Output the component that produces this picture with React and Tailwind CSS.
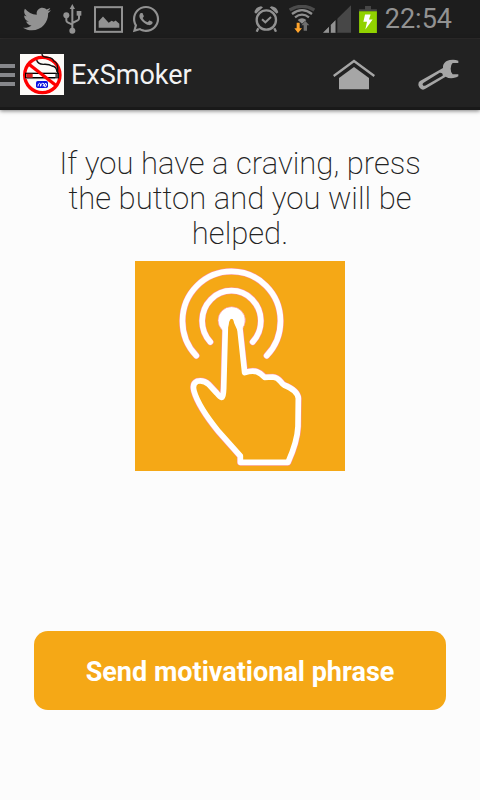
import { FaTwitter, FaWhatsapp } from 'react-icons/fa';

function UsbIcon() {
  return (
    <svg viewBox="189 13 57 90" className="h-[30px] w-[19px]" fill="#929292" stroke="#929292">
      <path d="M217 13l8 15h-16z" stroke="none" />
      <path d="M217 24v68M199 50v12q0 4 4 6l14 7M237 43v13q0 4-4 6l-16 8" fill="none" strokeWidth="6" />
      <circle cx="199" cy="47" r="9" stroke="none" />
      <rect x="230" y="34" width="14" height="14" stroke="none" />
      <circle cx="217" cy="93" r="9" stroke="none" />
    </svg>
  );
}

function PictureIcon() {
  return (
    <svg viewBox="279 17 87 80" className="h-[27px] w-[29px]">
      <rect x="282" y="20" width="81" height="74" fill="none" stroke="#929292" strokeWidth="6" />
      <path d="M293 82V62l13-14 17 19 9-6 6 3 6-4 11 10v12z" fill="#929292" />
    </svg>
  );
}

function AlarmIcon() {
  return (
    <svg viewBox="41 19 75 78" className="h-[26px] w-[25px]" fill="none" stroke="#929292">
      <circle cx="78" cy="61" r="29" strokeWidth="7" />
      <path d="M65 59l10 9 17-16" strokeWidth="6" />
      <path d="M54 86l-5 10M102 86l5 10" strokeWidth="7" />
      <path d="M42 38q4-16 20-18l6 3-21 19zM114 38q-4-16-20-18l-6 3 21 19z" fill="#929292" stroke="none" />
    </svg>
  );
}

function WifiIcon() {
  return (
    <svg viewBox="148 13 78 84" className="h-7 w-[26px]" fill="none">
      <path d="M150 28q37-22 74 0" stroke="#4b4b4b" strokeWidth="10" />
      <path d="M157 40q30-23 60 0" stroke="#8f8f8f" strokeWidth="7" />
      <path d="M166 50q21-16 42 0" stroke="#8f8f8f" strokeWidth="7" />
      <path d="M174 58q13-10 26 0l-13 11z" fill="#8f8f8f" />
      <path d="M197 61l12 13h-7v16h-10V74h-7z" fill="#6e6e6e" />
      <path d="M171 66h9v17h7l-12 14-11-14h7z" fill="#ffa42c" />
    </svg>
  );
}

function SignalIcon() {
  return (
    <svg viewBox="252 13 84 84" className="size-7">
      <path d="M336 14v82h-84z" fill="#474747" />
      <path d="M270 78v18h-18z" fill="#929292" />
      <path d="M275 73l15-15v38h-15z" fill="#929292" />
      <path d="M270 78l5-5v23h-5zM290 58l5-5v43h-5z" fill="#1d1d1d" />
    </svg>
  );
}

function BatteryIcon() {
  return (
    <svg viewBox="357 14 54 82" className="h-[27px] w-[18px]">
      <path d="M375 14h18v10h18v7h-54v-7h18z" fill="#474747" />
      <path d="M357 30h54v66h-54z" fill="#91d200" />
      <path d="M375 40h17l-5 15h11l-22 30 5-23h-11z" fill="#fff" />
    </svg>
  );
}

function StatusBar() {
  return (
    <div className="flex h-[39px] items-center justify-between border-b border-[#2f2d2d] bg-[#1d1d1d] pr-7 pl-[23px] text-[#929292]">
      <div className="flex items-center gap-3">
        <FaTwitter className="size-7" />
        <UsbIcon />
        <div className="flex items-center gap-2">
          <PictureIcon />
          <FaWhatsapp className="size-[30px]" />
        </div>
      </div>
      <div className="flex items-center gap-2.5">
        <AlarmIcon />
        <div className="flex items-center gap-2">
          <WifiIcon />
          <SignalIcon />
          <BatteryIcon />
          <span className="text-[27px] leading-8">22:54</span>
        </div>
      </div>
    </div>
  );
}

function AppLogo() {
  return (
    <svg viewBox="60 54 132 123" className="h-[41px] w-11">
      <rect x="60" y="54" width="132" height="123" fill="#fdfbf8" />
      <circle cx="127" cy="117" r="53" fill="none" stroke="#f00" strokeWidth="10" />
      <path d="M77 127h88" stroke="#b9aeb0" strokeWidth="5" />
      <rect x="77" y="112" width="98" height="13" fill="#fff" stroke="#000" strokeWidth="4" />
      <rect x="79" y="113" width="19" height="12" fill="#e02020" />
      <rect x="166" y="113" width="9" height="12" fill="#555" />
      <path
        d="M126 54q0 10 18 10 14 1 17 11 12 5 12 20v16M110 72q3 12 20 13 18-1 26 5 14 1 15 18"
        fill="none"
        stroke="#111"
        strokeWidth="4"
      />
      <path d="M86 84l84 66" stroke="#f00" strokeWidth="10" />
      <rect x="108" y="135" width="36" height="21" rx="5" fill="#0b10e0" />
      <path
        d="M114 151q0-9 5-9t2 9M122 151q0-9 6-9t4 5-4 3M133 149q1-7 5-7t0 8-5-3"
        fill="none"
        stroke="#fff"
        strokeWidth="3"
      />
    </svg>
  );
}

function HomeIcon() {
  return (
    <svg viewBox="39 56 126 93" className="h-[31px] w-[42px]">
      <path d="M41 107l61-45 61 45" fill="none" stroke="#a6a6a6" strokeWidth="7" />
      <path d="M102 80l45 33v34H57v-34z" fill="#a6a6a6" />
    </svg>
  );
}

function WrenchIcon() {
  return (
    <svg viewBox="293 55 123 93" className="h-[31px] w-[41px]">
      <path
        fillRule="evenodd"
        fill="#a6a6a6"
        d="M414 67V60Q402 55 388 58C374 61 367 71 368 82L299 121Q292 126 295 136 299 146 308 147L314 145 376 108Q386 114 399 112 410 111 414 107V101H397Q391 96 391 84T397 67ZM310 126L358 96Q369 95 367 105L317 134Q309 138 307 132 306 129 310 126Z"
      />
    </svg>
  );
}

function ActionBar() {
  return (
    <header className="flex h-[71px] items-center bg-[#222] pr-[21px] shadow-[inset_0_-3px_0_#191919,0_1px_4px_rgba(0,0,0,0.5)]">
      <button type="button" aria-label="Open menu" className="flex items-center gap-[5px]">
        <span className="flex w-[15px] flex-col gap-[5px]">
          <span className="h-1 bg-[#86878b]" />
          <span className="h-1 bg-[#86878b]" />
          <span className="h-1 bg-[#86878b]" />
        </span>
        <AppLogo />
      </button>
      <h1 className="ml-[7px] text-[27px] leading-8 text-[#f3f3f3]">ExSmoker</h1>
      <nav className="ml-auto flex items-center gap-[43px]">
        <button type="button" aria-label="Home">
          <HomeIcon />
        </button>
        <button type="button" aria-label="Settings">
          <WrenchIcon />
        </button>
      </nav>
    </header>
  );
}

const OUTER_RING = 'M199 302A147 149 0 1 1 410 302';
const INNER_RING = 'M241 261A88 91 0 1 1 368 261';
const HAND =
  'M286 214 L281 400Q280 428 274 427 270 426 260 414L236 388Q220 374 201 379 186 386 192 408 205 455 266 530L331 603V622H474Q502 560 504 514L505 430Q503 406 462 390C450 382 450 368 428 366L404 367C390 352 376 342 344 353L329 214Q322 182 305 182T286 214Z';

function CravingButton() {
  return (
    <button type="button" aria-label="I have a craving" className="bg-[#f5a816]">
      <svg viewBox="15 18 630 630" className="size-[210px]" fill="none" strokeLinecap="round" strokeLinejoin="round">
        {/* pink fringe first, white line on top */}
        <g stroke="#fb8f9a" strokeWidth="20">
          <path d={OUTER_RING} />
          <path d={INNER_RING} />
          <path d={HAND} />
        </g>
        <circle cx="305" cy="196" r="41" fill="#fff" stroke="#fb8f9a" strokeWidth="2" />
        <g stroke="#fff" strokeWidth="17">
          <path d={OUTER_RING} />
          <path d={INNER_RING} />
          <path d={HAND} fill="#f5a816" />
        </g>
        {/* narrow fingertip inside the dot */}
        <path d="M286 222L290 202Q294 184 305 184T319 202L328 222" stroke="#fff" strokeWidth="14" />
      </svg>
    </button>
  );
}

export default function App() {
  return (
    <div className="min-h-screen bg-[#fcfcfc] font-['Roboto',sans-serif]">
      <StatusBar />
      <ActionBar />
      <main className="flex flex-col items-center px-[34px] pt-9">
        <p className="px-4 text-center text-[31px] leading-[35px] font-extralight text-[#222]">
          If you have a craving, press the button and you will be helped.
        </p>
        <div className="mt-2.5 flex">
          <CravingButton />
        </div>
        <button
          type="button"
          className="mt-40 h-[79px] w-full rounded-[14px] bg-[#f5a816] pt-0.5 text-[27px] leading-8 font-bold text-white"
        >
          Send motivational phrase
        </button>
      </main>
    </div>
  );
}
